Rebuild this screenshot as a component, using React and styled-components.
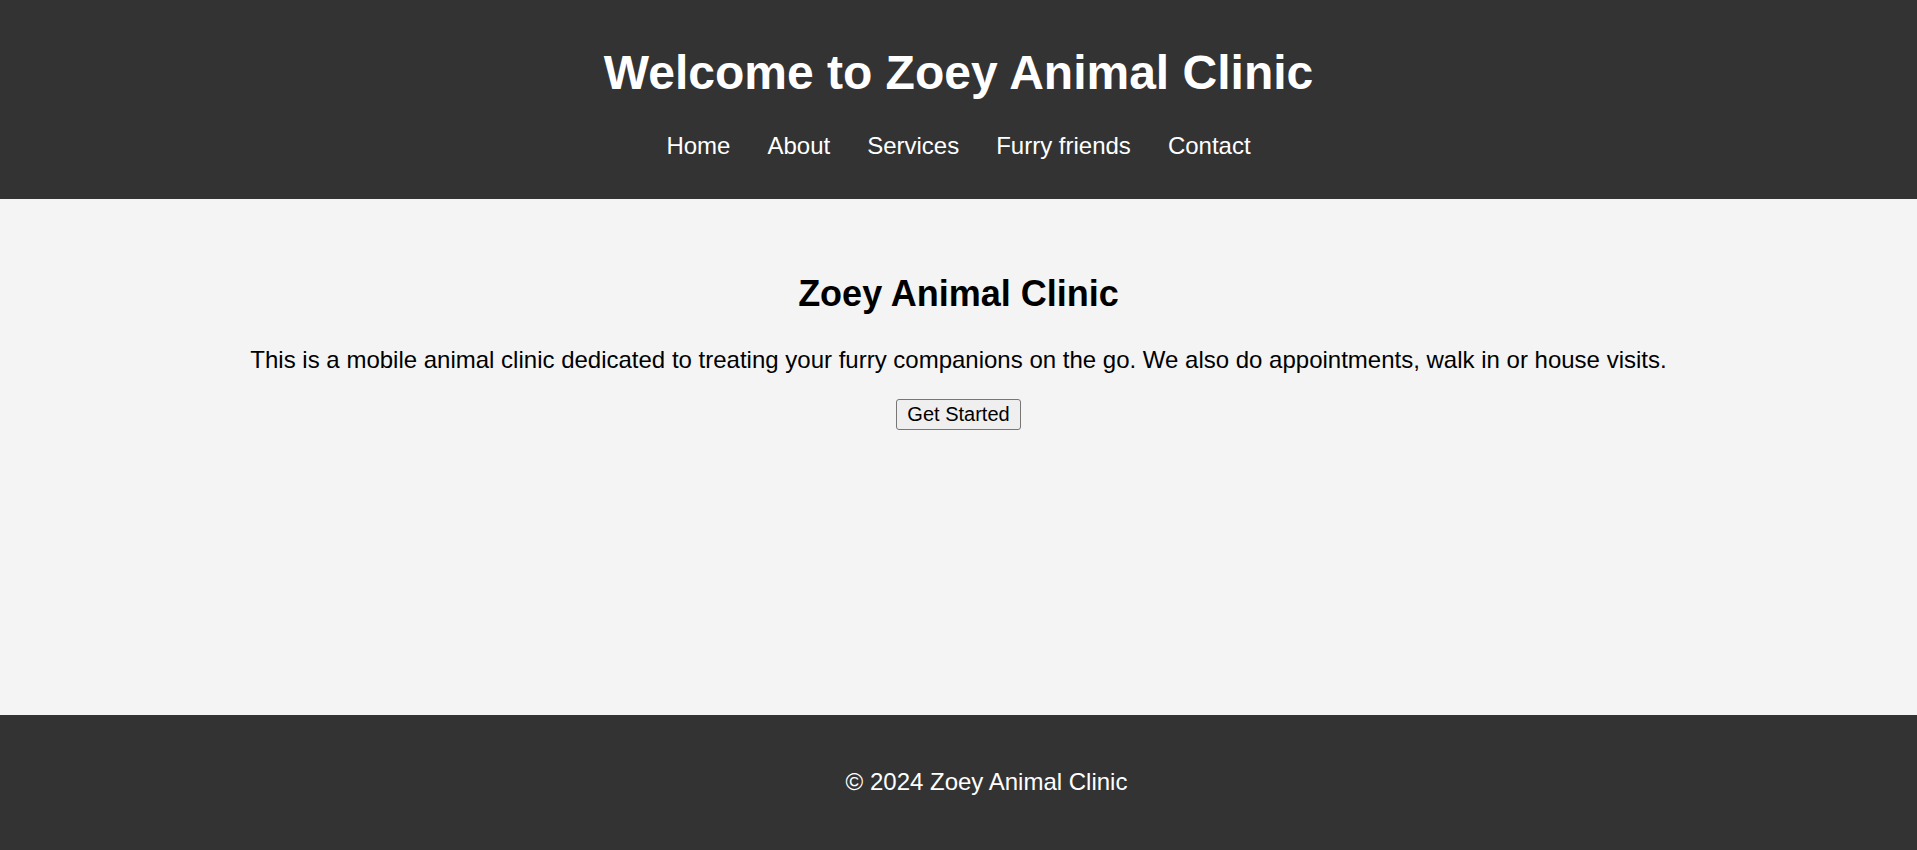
import React from "react";
import styled, { createGlobalStyle } from "styled-components";

const GlobalStyle = createGlobalStyle`
  html, body {
    margin: 0;
    padding: 0;
    background: #333333;
  }
  body {
    font-family: Arial, "Liberation Sans", sans-serif;
  }
`;

const Header = styled.header`
  background: #333333;
  color: #ffffff;
  text-align: center;
  padding: 45px 0 39px;
`;

const Title = styled.h1`
  margin: 0;
  font-size: 48px;
  line-height: 55px;
  font-weight: bold;
`;

const Nav = styled.nav`
  margin-top: 32px;
`;

const NavList = styled.ul`
  list-style: none;
  margin: 0;
  padding: 0;
  display: flex;
  justify-content: center;
  gap: 37px;
`;

const NavLink = styled.a`
  color: #ffffff;
  text-decoration: none;
  font-size: 24px;
  line-height: 28px;
`;

const Main = styled.main`
  background: #f4f4f4;
  color: #000000;
  text-align: center;
  box-sizing: border-box;
  height: 516px;
  padding-top: 74px;
`;

const Heading = styled.h2`
  margin: 0;
  font-size: 36px;
  line-height: 41px;
  font-weight: bold;
`;

const Lead = styled.p`
  margin: 32px 0 25px;
  font-size: 24px;
  line-height: 28px;
`;

const Button = styled.button`
  font-family: Arial, "Liberation Sans", sans-serif;
  font-size: 20px;
  line-height: 23px;
  color: #000000;
  background: #efefef;
  border: 1px solid #767676;
  border-radius: 3px;
  padding: 3px 10px;
  cursor: pointer;
`;

const Footer = styled.footer`
  background: #333333;
  color: #ffffff;
  text-align: center;
  padding: 53px 0 54px 56px;
`;

const FooterText = styled.p`
  margin: 0;
  font-size: 24px;
  line-height: 28px;
`;

const links = ["Home", "About", "Services", "Furry friends", "Contact"];

export default function App() {
  return (
    <>
      <GlobalStyle />
      <Header>
        <Title>Welcome to Zoey Animal Clinic</Title>
        <Nav>
          <NavList>
            {links.map((l) => (
              <li key={l}>
                <NavLink href="#">{l}</NavLink>
              </li>
            ))}
          </NavList>
        </Nav>
      </Header>
      <Main>
        <Heading>Zoey Animal Clinic</Heading>
        <Lead>
          This is a mobile animal clinic dedicated to treating your furry
          companions on the go. We also do appointments, walk in or house
          visits.
        </Lead>
        <Button>Get Started</Button>
      </Main>
      <Footer>
        <FooterText>© 2024 Zoey Animal Clinic</FooterText>
      </Footer>
    </>
  );
}
